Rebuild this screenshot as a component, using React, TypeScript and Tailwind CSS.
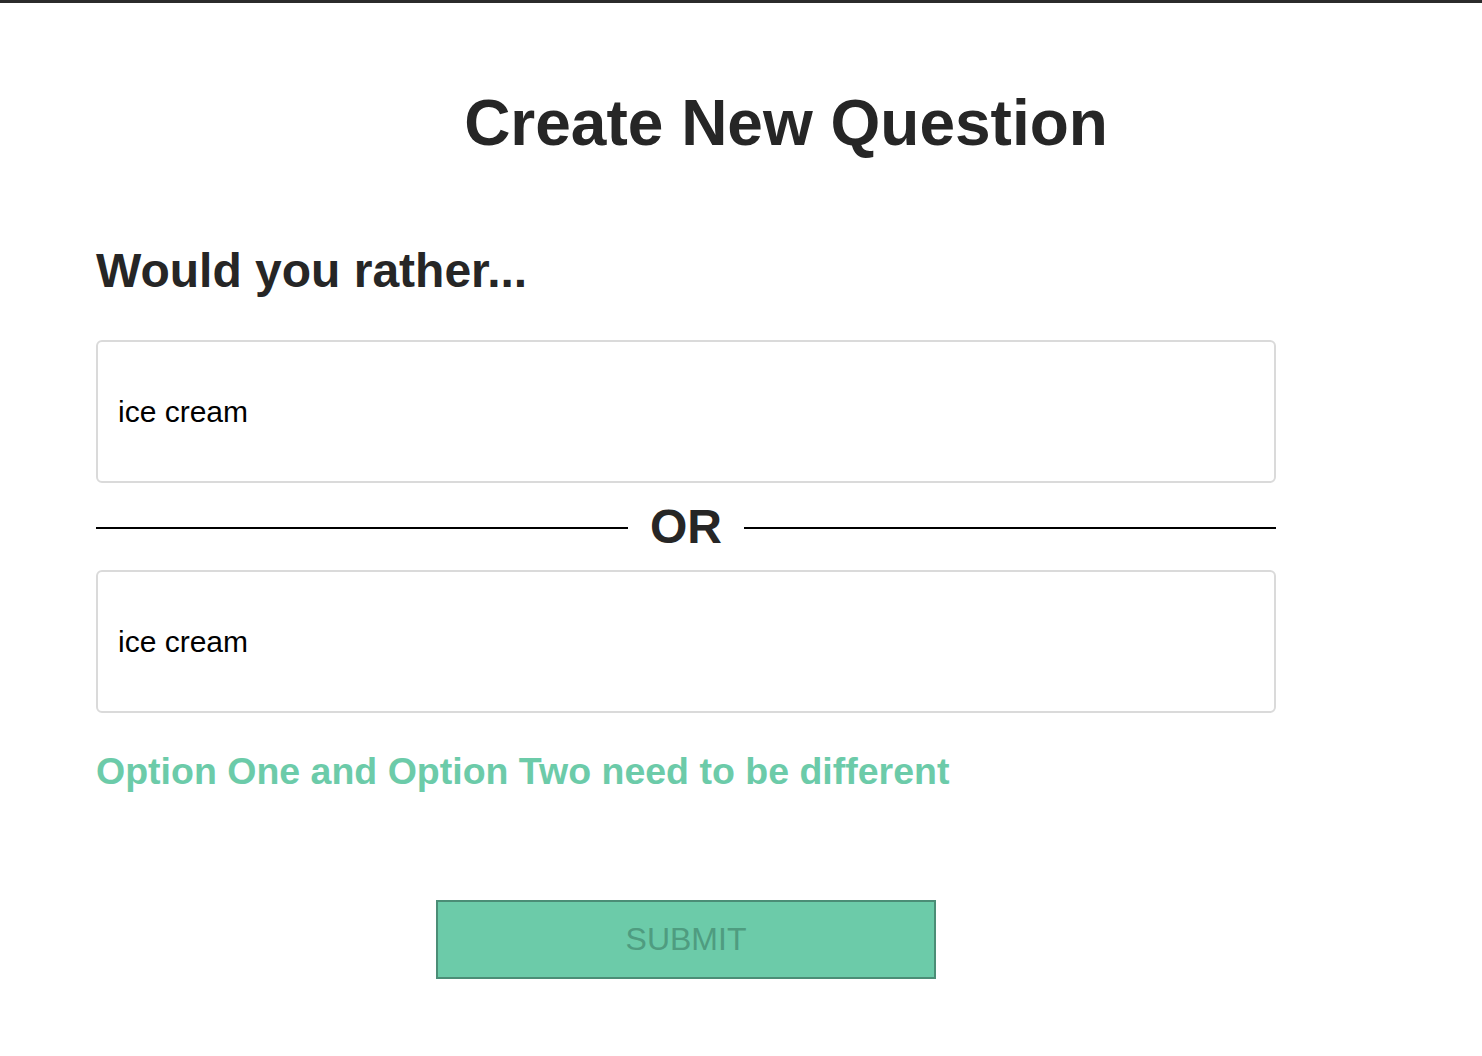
import React from "react";

export default function App() {
  return (
    <div className="min-h-screen bg-white text-[#262626]" style={{ fontFamily: '"Liberation Sans", Arial, Helvetica, sans-serif' }}>
      <div className="h-[3px] bg-[#2b2b2b]" />
      <div className="pl-[96px] pr-[6px]">
        <h1 className="mt-[88px] text-center text-[64px] font-bold leading-none">Create New Question</h1>
      </div>
      <div className="pl-[96px]">
        <div className="w-[1180px]">
          <h2 className="mt-[92px] text-[48px] font-bold leading-none">Would you rather...</h2>
          <input
            defaultValue="ice cream"
            className="mt-[45px] block h-[143px] w-full rounded-md border-2 border-[#dadada] bg-white pl-[20px] text-[30px] text-black outline-none"
          />
          <div className="flex h-[87px] items-center pt-[2px]">
            <div className="h-[2px] flex-1 bg-black" />
            <span className="mx-[22px] -mt-[2px] text-[48px] font-bold leading-none">OR</span>
            <div className="h-[2px] flex-1 bg-black" />
          </div>
          <input
            defaultValue="ice cream"
            className="block h-[143px] w-full rounded-md border-2 border-[#dadada] bg-white pl-[20px] text-[30px] text-black outline-none"
          />
          <h3 className="mt-[40px] text-[37.5px] font-bold leading-none text-[#6ccba9]">
            Option One and Option Two need to be different
          </h3>
          <div className="mt-[109px] flex justify-center">
            <button className="h-[79px] w-[500px] border-2 border-[#4b8d76] bg-[#6ccba9] text-[32px] leading-none text-[#4f9c80]">
              SUBMIT
            </button>
          </div>
        </div>
      </div>
    </div>
  );
}
